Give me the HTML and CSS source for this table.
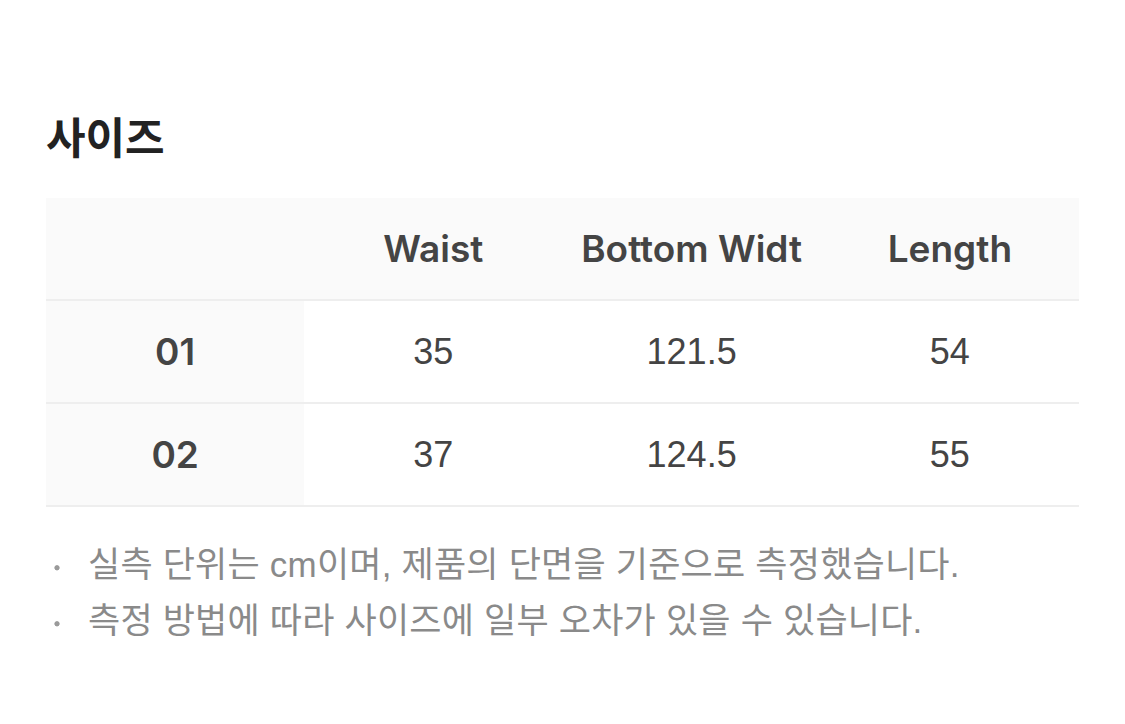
FILE: index.html
```html
<!DOCTYPE html>
<html lang="ko">
<head>
<meta charset="utf-8">
<link rel="stylesheet" href="styles.css">
</head>
<body>
<section class="size">
  <h2 class="title">사이즈</h2>
  <table class="table">
    <thead>
      <tr>
        <th class="corner"></th>
        <th>Waist</th>
        <th>Bottom Widt</th>
        <th>Length</th>
      </tr>
    </thead>
    <tbody>
      <tr>
        <th class="rowhead">01</th>
        <td>35</td>
        <td>121.5</td>
        <td>54</td>
      </tr>
      <tr>
        <th class="rowhead">02</th>
        <td>37</td>
        <td>124.5</td>
        <td>55</td>
      </tr>
    </tbody>
  </table>
  <ul class="notes">
    <li>실측 단위는 cm이며, 제품의 단면을 기준으로 측정했습니다.</li>
    <li>측정 방법에 따라 사이즈에 일부 오차가 있을 수 있습니다.</li>
  </ul>
</section>
</body>
</html>
```
FILE: styles.css
```css
html, body {
  margin: 0;
  padding: 0;
  background: #fff;
}
body {
  font-family: Inter, "Noto Sans CJK KR", sans-serif;
  color: #444;
}
.size {
  padding: 108px 46px 0 46px;
}
.title {
  margin: 0 0 36px 0;
  font-family: "Noto Sans CJK KR", sans-serif;
  font-size: 43px;
  font-weight: 700;
  color: #222;
  line-height: 54px;
}
.table {
  width: 100%;
  border-collapse: collapse;
  table-layout: fixed;
}
.table th, .table td {
  height: 101px;
  padding: 0;
  text-align: center;
  border-bottom: 2px solid #eeeeee;
}
.table thead th,
.table .rowhead {
  background: #fafafa;
  font-family: Inter, "Noto Sans CJK KR", sans-serif;
  font-size: 37px;
  font-weight: 600;
  color: #444;
}
.table td {
  font-family: "Liberation Sans", "Noto Sans CJK KR", sans-serif;
  font-size: 36px;
  font-weight: 400;
  color: #444;
}
.notes {
  list-style: none;
  margin: 30px 0 0 0;
  padding: 0;
  font-family: "Liberation Sans", "Noto Sans CJK KR", sans-serif;
  font-size: 35px;
  font-weight: 400;
  color: #8a8a8a;
  line-height: 56px;
  letter-spacing: 0.2px;
}
.notes li {
  display: flex;
}
.notes li::before {
  content: "";
  width: 42px;
  flex: none;
  background: radial-gradient(circle at 11px 55%, #9a9a9a 2.2px, rgba(154,154,154,0) 3px);
}
```
